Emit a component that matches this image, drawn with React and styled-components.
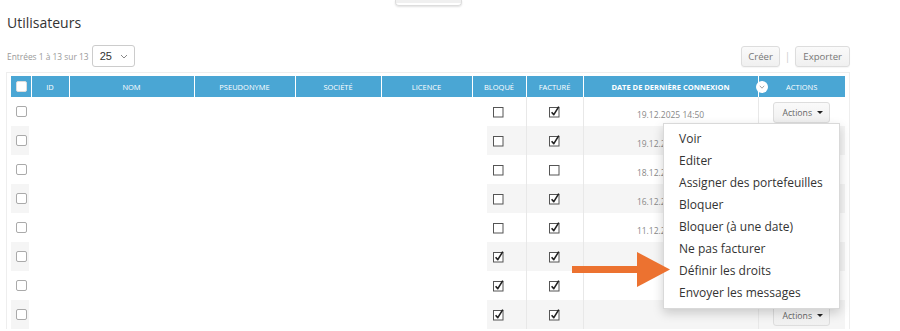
import React from 'react'
import styled, { createGlobalStyle } from 'styled-components'

const GlobalStyle = createGlobalStyle`
  body {
    margin: 0;
    background: #fff;
    font-family: "Open Sans", "Liberation Sans", sans-serif;
    color: #333;
    overflow: hidden;
  }
`

const columns = [
  { key: 'check', label: '', width: 20 },
  { key: 'id', label: 'ID', width: 38 },
  { key: 'nom', label: 'Nom', width: 125 },
  { key: 'pseudo', label: 'Pseudonyme', width: 101 },
  { key: 'societe', label: 'Société', width: 86 },
  { key: 'licence', label: 'Licence', width: 91 },
  { key: 'bloque', label: 'Bloqué', width: 54 },
  { key: 'facture', label: 'Facturé', width: 57 },
  { key: 'date', label: 'Date de dernière connexion', width: 175, sorted: true },
  { key: 'actions', label: 'Actions', width: 87 },
]

const users = [
  { bloque: false, facture: true, date: '19.12.2025 14:50' },
  { bloque: false, facture: true, date: '19.12.2025 10:12' },
  { bloque: false, facture: false, date: '18.12.2025 16:37' },
  { bloque: false, facture: true, date: '16.12.2025 09:05' },
  { bloque: false, facture: true, date: '11.12.2025 11:48' },
  { bloque: true, facture: true, date: '' },
  { bloque: true, facture: true, date: '' },
  { bloque: true, facture: true, date: '' },
]

const menuItems = [
  'Voir',
  'Editer',
  'Assigner des portefeuilles',
  'Bloquer',
  'Bloquer (à une date)',
  'Ne pas facturer',
  'Définir les droits',
  'Envoyer les messages',
]

const Page = styled.div`
  position: relative;
  width: 900px;
  height: 331px;
  overflow: hidden;
  padding: 0 50px 0 6px;
  box-sizing: border-box;
`

const TopTab = styled.div`
  margin-left: 389px;
  width: 67px;
  height: 6px;
  box-sizing: border-box;
  border: 1px solid #ddd;
  border-top: none;
  border-radius: 0 0 4px 4px;
  background: linear-gradient(#f0f0f0 0 3px, #fff 3px);
  box-shadow: 0 1px 2px rgba(0, 0, 0, 0.12);
`

const Title = styled.h1`
  margin: 8px 0 0 1px;
  font-size: 14px;
  line-height: 18px;
  font-weight: 400;
  color: #333;
`

const Toolbar = styled.div`
  display: flex;
  align-items: center;
  justify-content: space-between;
  height: 22px;
  margin-top: 13px;
`

const Entries = styled.div`
  display: flex;
  align-items: center;
  gap: 3px;
  padding-left: 1px;
  font-size: 8.4px;
  color: #999;
`

const Select = styled.div`
  display: flex;
  align-items: center;
  justify-content: space-between;
  width: 43px;
  height: 22px;
  box-sizing: border-box;
  padding: 0 6px 0 7px;
  border: 1px solid #ccc;
  border-radius: 3px;
  font-family: "Liberation Sans", sans-serif;
  font-size: 11px;
  color: #333;
`

const Buttons = styled.div`
  display: flex;
  align-items: center;
  gap: 5px;
`

const Sep = styled.span`
  color: #ccc;
  font-size: 10px;
`

const Button = styled.button`
  height: 21px;
  padding: 0 ${p => (p.$wide ? 7 : 6)}px;
  border: 1px solid #ddd;
  border-radius: 3px;
  background: linear-gradient(#fafafa, #f0f0f0);
  font-family: inherit;
  font-size: 9.6px;
  color: #777;
  box-shadow: 0 1px 1px rgba(0, 0, 0, 0.04);
`

const Panel = styled.div`
  margin-top: 5px;
  padding: 3px 4px 0 4px;
  border: 1px solid #eee;
  border-bottom: none;
`

const Table = styled.table`
  width: 834px;
  table-layout: fixed;
  border-collapse: collapse;
`

const Th = styled.th`
  position: relative;
  height: 21px;
  padding: 0;
  background: #4aa6d4;
  border-left: 1px solid rgba(255, 255, 255, 0.55);
  color: #fff;
  font-size: 7.5px;
  font-weight: ${p => (p.$sorted ? 700 : 400)};
  text-transform: uppercase;
  text-align: center;
  &:first-child {
    border-left: none;
  }
`

const SortBadge = styled.span`
  position: absolute;
  right: -10px;
  top: 50%;
  transform: translateY(-50%);
  z-index: 2;
  display: flex;
  align-items: center;
  justify-content: center;
  width: 12px;
  height: 12px;
  border-radius: 50%;
  background: #fff;
`

const Row = styled.tr`
  height: 29px;
  background: ${p => (p.$striped ? '#f5f5f5' : '#fff')};
`

const Td = styled.td`
  padding: 0;
  text-align: center;
  vertical-align: middle;
  border-left: ${p => (p.$line ? '1px solid #e8e8e8' : 'none')};
`

const CheckCell = styled(Td)`
  background: linear-gradient(90deg, transparent 18px, #fff 18px);
`

const BlankCell = styled(Td)`
  background: #fff;
`

const BloqueCell = styled(Td)`
  background: linear-gradient(90deg, #fff 15px, transparent 15px);
`

const DateText = styled.span`
  font-size: 8.5px;
  color: #888;
`

const RoundBox = styled.span`
  display: block;
  width: 11px;
  height: 11px;
  box-sizing: border-box;
  margin: -1px 0 0 5px;
  border: 1px solid ${p => (p.$light ? '#ddd' : '#aaa')};
  border-radius: 2px;
  background: #fff;
`

const Tick = styled.svg`
  display: block;
  margin: -1px auto 0;
`

const ActionGroup = styled.div`
  position: relative;
  display: inline-block;
  vertical-align: middle;
`

const ActionButton = styled.button`
  display: flex;
  align-items: center;
  gap: 5px;
  height: 21px;
  padding: 0 6px 0 8px;
  border: 1px solid #ddd;
  border-radius: 3px;
  background: linear-gradient(#fafafa, #f0f0f0);
  font-family: inherit;
  font-size: 8.7px;
  color: #666;
`

const Caret = styled.span`
  width: 0;
  height: 0;
  border-left: 3px solid transparent;
  border-right: 3px solid transparent;
  border-top: 3px solid #222;
`

const Menu = styled.ul`
  position: absolute;
  top: 100%;
  right: -10px;
  z-index: 10;
  width: 177px;
  box-sizing: border-box;
  margin: 0;
  padding: 4px 0 4px;
  list-style: none;
  text-align: left;
  background: #fff;
  border: 1px solid rgba(0, 0, 0, 0.15);
  box-shadow: 0 4px 10px rgba(0, 0, 0, 0.18);
`

const MenuItem = styled.li`
  padding: 0 15px;
  line-height: 22px;
  font-size: 12px;
  color: #333;
  white-space: nowrap;
`

const Arrow = styled.svg`
  position: absolute;
  left: 572px;
  top: 252px;
  z-index: 20;
`

function TickBox({ checked }) {
  return (
    <Tick width="13" height="13" viewBox="0 0 13 13">
      <rect x="1.5" y="2.5" width="9.5" height="9.5" fill="#fff" stroke="#555" strokeWidth="1" />
      {checked && (
        <path d="M3.6 7.2 L5.8 9.6 L10.8 1.6" fill="none" stroke="#222" strokeWidth="1.6" strokeLinejoin="round" />
      )}
    </Tick>
  )
}

function App() {
  return (
    <Page>
      <GlobalStyle />
      <TopTab />
      <Title>Utilisateurs</Title>
      <Toolbar>
        <Entries>
          Entrées 1 à 13 sur 13
          <Select>
            25
            <svg width="8" height="5" viewBox="0 0 8 5">
              <path d="M1 1 L4 4 L7 1" fill="none" stroke="#888" strokeWidth="1" />
            </svg>
          </Select>
        </Entries>
        <Buttons>
          <Button>Créer</Button>
          <Sep>|</Sep>
          <Button $wide>Exporter</Button>
        </Buttons>
      </Toolbar>
      <Panel>
        <Table>
          <colgroup>
            {columns.map(c => (
              <col key={c.key} style={{ width: c.width }} />
            ))}
          </colgroup>
          <thead>
            <tr>
              {columns.map(c => (
                <Th key={c.key} $sorted={c.sorted}>
                  {c.key === 'check' ? <RoundBox $light /> : c.label}
                  {c.sorted && (
                    <SortBadge>
                      <svg width="6" height="4" viewBox="0 0 6 4">
                        <path d="M0.8 0.8 L3 3.2 L5.2 0.8" fill="none" stroke="#999" strokeWidth="0.9" />
                      </svg>
                    </SortBadge>
                  )}
                </Th>
              ))}
            </tr>
          </thead>
          <tbody>
            {users.map((u, i) => (
              <Row key={i} $striped={i % 2 === 1}>
                <CheckCell>
                  <RoundBox />
                </CheckCell>
                <BlankCell />
                <BlankCell />
                <BlankCell />
                <BlankCell />
                <BlankCell />
                <BloqueCell>
                  <TickBox checked={u.bloque} />
                </BloqueCell>
                <Td $line>
                  <TickBox checked={u.facture} />
                </Td>
                <Td $line>
                  <DateText>{u.date}</DateText>
                </Td>
                <Td $line>
                  <ActionGroup>
                    <ActionButton>
                      Actions <Caret />
                    </ActionButton>
                    {i === 0 && (
                      <Menu>
                        {menuItems.map(m => (
                          <MenuItem key={m}>{m}</MenuItem>
                        ))}
                      </Menu>
                    )}
                  </ActionGroup>
                </Td>
              </Row>
            ))}
          </tbody>
        </Table>
      </Panel>
      <Arrow width="98" height="35" viewBox="0 0 98 35">
        <rect x="0" y="14" width="67" height="7" fill="#ec7230" />
        <polygon points="65,0 98,17.5 65,35" fill="#ec7230" />
      </Arrow>
    </Page>
  )
}

export default App
